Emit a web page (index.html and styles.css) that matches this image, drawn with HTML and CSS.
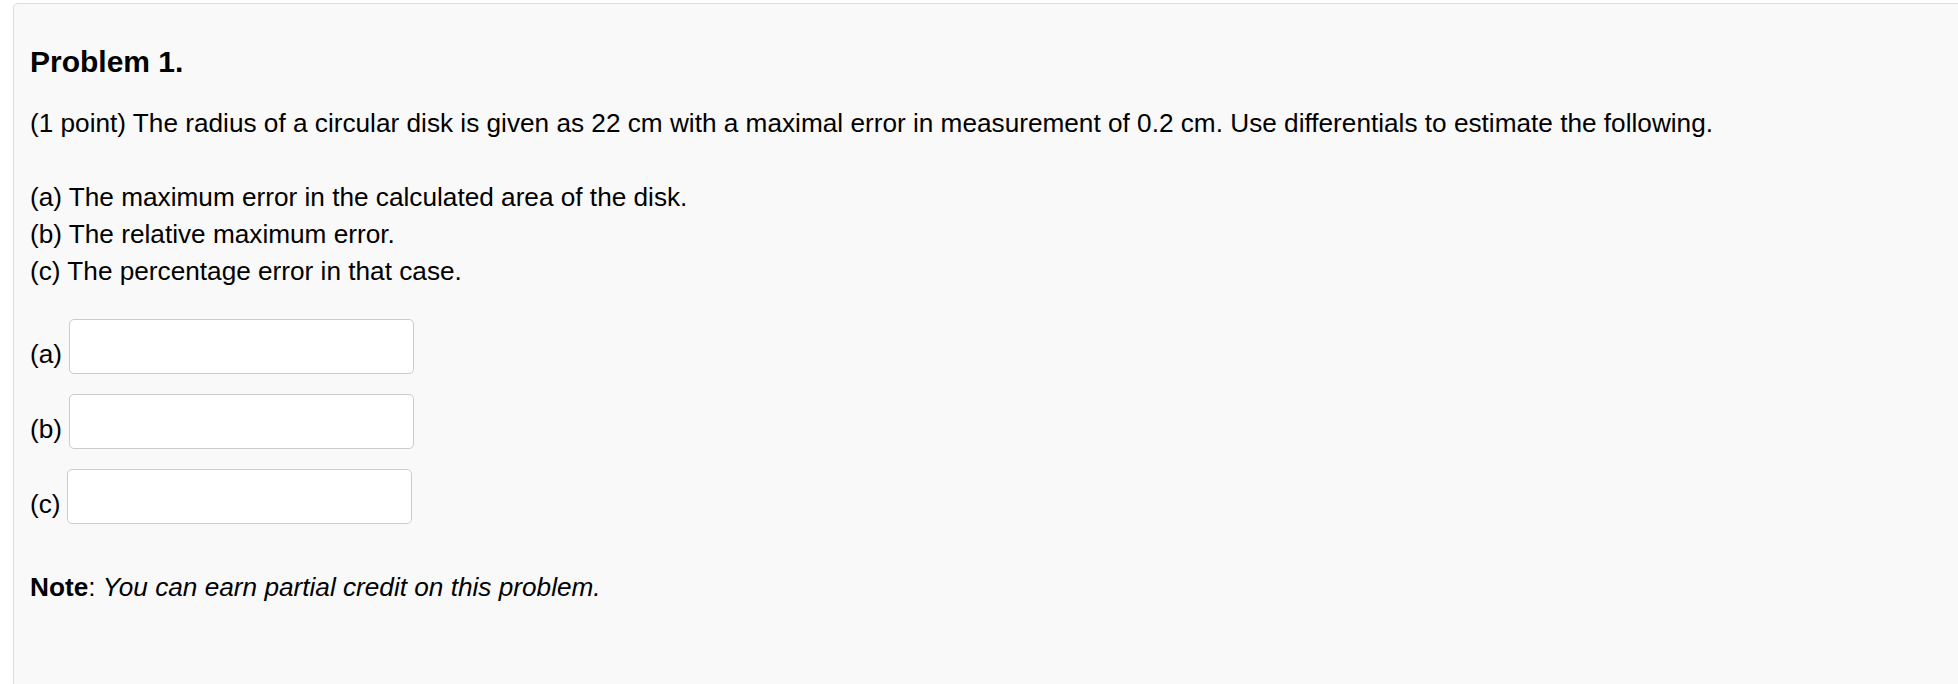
FILE: index.html
```html
<!DOCTYPE html>
<html lang="en">
<head>
<meta charset="utf-8">
<title>Problem 1.</title>
<link rel="stylesheet" href="styles.css">
</head>
<body>
<div class="card">
  <h3 class="title">Problem 1.</h3>
  <p class="intro">(1 point) The radius of a circular disk is given as 22 cm with a maximal error in measurement of 0.2 cm. Use differentials to estimate the following.</p>
  <div class="parts">
    <div class="line">(a) The maximum error in the calculated area of the disk.</div>
    <div class="line">(b) The relative maximum error.</div>
    <div class="line">(c) The percentage error in that case.</div>
  </div>
  <div class="answers">
    <div class="answer"><span class="label">(a)</span><input class="field" type="text"></div>
    <div class="answer"><span class="label">(b)</span><input class="field" type="text"></div>
    <div class="answer"><span class="label">(c)</span><input class="field" type="text"></div>
  </div>
  <p class="note"><b>Note</b>: <i>You can earn partial credit on this problem.</i></p>
</div>
</body>
</html>
```

FILE: styles.css
```css
html, body {
  margin: 0;
  padding: 0;
  background: #ffffff;
  overflow: hidden;
}
body {
  font-family: "Liberation Sans", Arial, sans-serif;
  color: #000;
  font-size: 26.2px;
  line-height: 36.7px;
}
.card {
  margin: 3px 0 0 13px;
  height: 681px;
  box-sizing: border-box;
  background: #f9f9f9;
  border-top: 1px solid #dcdcdc;
  border-left: 1px solid #dcdcdc;
  border-top-left-radius: 5px;
  padding: 39.6px 0 0 16px;
}
.title {
  margin: 0;
  font-size: 30px;
  line-height: 36px;
  font-weight: bold;
}
.intro {
  margin: 25px 0 0 0;
}
.parts {
  margin-top: 38px;
}
.answers {
  margin-top: 30px;
  display: flex;
  flex-direction: column;
  gap: 20px;
}
.answer {
  display: flex;
  align-items: flex-end;
  gap: 6.5px;
}
.label {
  line-height: 36.7px;
  margin-bottom: 1.7px;
}
.field {
  width: 345px;
  height: 55px;
  box-sizing: border-box;
  margin: 0;
  border: 1px solid #cccccc;
  border-radius: 5px;
  background: #ffffff;
  font: inherit;
}
.note {
  margin: 44.6px 0 0 0;
}
```
